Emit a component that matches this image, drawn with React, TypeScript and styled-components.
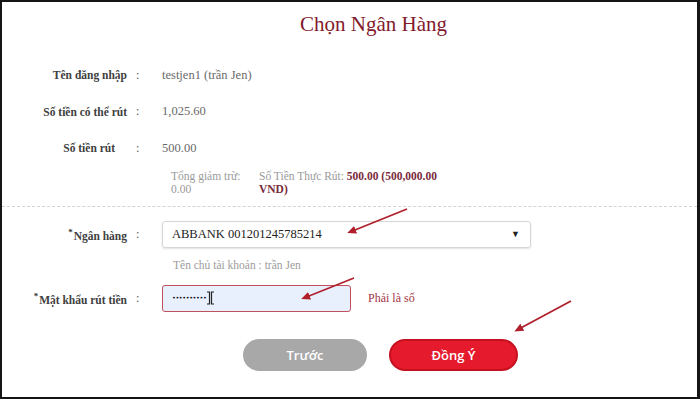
import styled, { createGlobalStyle } from 'styled-components';

const GlobalStyle = createGlobalStyle`
  body {
    margin: 0;
    background: #fff;
  }
`;

const infoRows = [
  { label: 'Tên đăng nhập', value: 'testjen1 (trần Jen)', pad: 0 },
  { label: 'Số tiền có thể rút', value: '1,025.60', pad: 0 },
  { label: 'Số tiền rút', value: '500.00', pad: 12 },
];

// annotation arrows drawn on top of the screenshot
const arrows = [
  { x1: 407, y1: 209, x2: 350, y2: 232 },
  { x1: 354, y1: 278, x2: 304, y2: 298 },
  { x1: 571, y1: 301, x2: 517, y2: 330 },
];

function App() {
  return (
    <>
      <GlobalStyle />
      <Frame>
        <Title>Chọn Ngân Hàng</Title>

        <InfoList>
          {infoRows.map(({ label, value, pad }) => (
            <Row key={label}>
              <Label $pad={pad}>{label}</Label>
              <Colon>:</Colon>
              <Value>{value}</Value>
            </Row>
          ))}
        </InfoList>

        <Summary>
          <SummaryCol $width={88}>
            Tổng giảm trừ:
            <br />
            0.00
          </SummaryCol>
          <SummaryCol $width={200}>
            Số Tiền Thực Rút: <strong>500.00 (500,000.00</strong>
            <br />
            <strong>VND)</strong>
          </SummaryCol>
        </Summary>

        <Divider />

        <FieldRow>
          <Label>
            <Star>*</Star>Ngân hàng
          </Label>
          <Colon>:</Colon>
          <Select>
            <span>ABBANK 001201245785214</span>
            <Caret>▼</Caret>
          </Select>
        </FieldRow>

        <Holder>Tên chủ tài khoản : trần Jen</Holder>

        <FieldRow>
          <Label>
            <Star>*</Star>Mật khẩu rút tiền
          </Label>
          <Colon>:</Colon>
          <InputWrap>
            <PasswordBox>
              <Dots>••••••••••</Dots>
              <svg width='9' height='14' viewBox='0 0 9 14'>
                <path
                  d='M1 1h2.5v12H1M8 1H5.5v12H8'
                  fill='none'
                  stroke='#222'
                  strokeWidth='1.2'
                />
              </svg>
            </PasswordBox>
            <Hint>Phải là số</Hint>
          </InputWrap>
        </FieldRow>

        <Actions>
          <Button $variant='back'>Trước</Button>
          <Button $variant='ok'>Đồng Ý</Button>
        </Actions>

        <Overlay viewBox='0 0 700 399'>
          <defs>
            <marker
              id='head'
              markerWidth='9'
              markerHeight='8'
              refX='6'
              refY='4'
              orient='auto'
              markerUnits='userSpaceOnUse'
            >
              <path d='M0 0L9 4L0 8z' fill='#b0202c' />
            </marker>
          </defs>
          {arrows.map((a, i) => (
            <line
              key={i}
              x1={a.x1}
              y1={a.y1}
              x2={a.x2}
              y2={a.y2}
              stroke='#b0202c'
              strokeWidth='1.8'
              markerEnd='url(#head)'
            />
          ))}
        </Overlay>
      </Frame>
    </>
  );
}

export default App;

const Frame = styled.div`
  position: relative;
  width: 700px;
  height: 399px;
  box-sizing: border-box;
  border: 2px solid #151515;
  border-right-width: 3px;
  background: #fff;
  font-family: 'Liberation Serif', 'DejaVu Serif', serif;
  overflow: hidden;
`;

const Title = styled.h2`
  margin: 0;
  padding: 7px 0 0 48px;
  height: 29px;
  text-align: center;
  font-size: 21px;
  line-height: 30px;
  font-weight: 400;
  color: #821a2c;
`;

const InfoList = styled.div`
  margin-top: 19px;
`;

const Row = styled.div`
  display: grid;
  grid-template-columns: 125px 35px 1fr;
  align-items: center;
  height: 36.5px;
  font-size: 12px;
`;

const Label = styled.div<{ $pad?: number }>`
  padding-right: ${(p) => p.$pad ?? 0}px;
  text-align: right;
  font-size: 11.5px;
  font-weight: 700;
  color: #404040;
  white-space: nowrap;
`;

const Star = styled.sup`
  font-size: 9px;
  margin-right: 1px;
  color: #333;
`;

const Colon = styled.div`
  padding-left: 9px;
  color: #555;
`;

const Value = styled.div`
  font-size: 12.5px;
  color: #6a6a6a;
`;

const Summary = styled.div`
  display: flex;
  margin: 3px 0 0 169px;
  font-size: 11.5px;
  line-height: 13px;
  color: #9a9a9a;

  strong {
    color: #7a2a3c;
  }
`;

const SummaryCol = styled.div<{ $width: number }>`
  width: ${(p) => p.$width}px;
  white-space: nowrap;
`;

const Divider = styled.hr`
  margin: 10px 0 0;
  border: none;
  border-top: 1px dashed #d4d4d4;
`;

const FieldRow = styled(Row)`
  height: auto;
  margin-top: 14px;
`;

const Select = styled.div`
  box-sizing: border-box;
  width: 369px;
  height: 27px;
  padding: 0 10px 0 9px;
  display: flex;
  align-items: center;
  justify-content: space-between;
  border: 1px solid #d6d6d6;
  border-radius: 3px;
  box-shadow: 0 1px 2px rgba(0, 0, 0, 0.12);
  color: #222;
  font-size: 12.5px;
`;

const Caret = styled.span`
  font-size: 9px;
  color: #222;
`;

const Holder = styled.div`
  margin: 11px 0 0 171px;
  font-size: 11.5px;
  color: #9c9c9c;
`;

const InputWrap = styled.div`
  display: flex;
  align-items: center;
  gap: 17px;
`;

const PasswordBox = styled.div`
  box-sizing: border-box;
  width: 189px;
  height: 27px;
  padding-left: 9px;
  display: flex;
  align-items: center;
  background: #e8f0fe;
  border: 1.5px solid #c0505c;
  border-radius: 3px;
`;

const Dots = styled.span`
  font-family: 'DejaVu Sans', sans-serif;
  font-size: 6.5px;
  letter-spacing: -0.4px;
  color: #111;
`;

const Hint = styled.span`
  font-size: 12px;
  color: #a33544;
`;

const Actions = styled.div`
  display: flex;
  gap: 22px;
  margin-top: 27px;
  padding-left: 241px;
`;

const Button = styled.button<{ $variant: 'back' | 'ok' }>`
  width: ${(p) => (p.$variant === 'ok' ? 129 : 124)}px;
  height: 32px;
  border-radius: 16px;
  border: 2px solid ${(p) => (p.$variant === 'ok' ? '#c4101f' : '#a8a8a8')};
  background: ${(p) => (p.$variant === 'ok' ? '#e51a2c' : '#a8a8a8')};
  color: #fff;
  font-family: 'Open Sans', 'Liberation Sans', sans-serif;
  font-size: 13px;
  font-weight: 600;
  cursor: pointer;
`;

const Overlay = styled.svg`
  position: absolute;
  left: -2px;
  top: -2px;
  width: 700px;
  height: 399px;
  pointer-events: none;
`;
